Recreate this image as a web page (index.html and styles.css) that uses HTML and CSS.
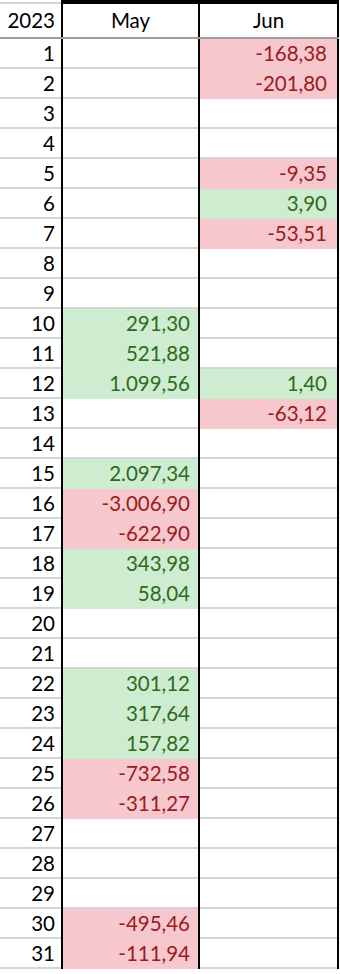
FILE: index.html
```html
<!DOCTYPE html>
<html>
<head>
<meta charset="utf-8">
<link rel="stylesheet" href="styles.css">
</head>
<body>
<div class="sheet">
  <div class="top-y"></div><div class="top-bar"></div>
  <div class="hd y">2023</div><div class="hd m">May</div><div class="hd j">Jun</div>
  <div class="hline"></div>

  <div class="c y">1</div><div class="c m"></div><div class="c j neg">-168,38</div>
  <div class="c y">2</div><div class="c m"></div><div class="c j neg">-201,80</div>
  <div class="c y">3</div><div class="c m"></div><div class="c j"></div>
  <div class="c y">4</div><div class="c m"></div><div class="c j"></div>
  <div class="c y">5</div><div class="c m"></div><div class="c j neg">-9,35</div>
  <div class="c y">6</div><div class="c m"></div><div class="c j pos">3,90</div>
  <div class="c y">7</div><div class="c m"></div><div class="c j neg">-53,51</div>
  <div class="c y">8</div><div class="c m"></div><div class="c j"></div>
  <div class="c y">9</div><div class="c m"></div><div class="c j"></div>
  <div class="c y">10</div><div class="c m pos">291,30</div><div class="c j"></div>
  <div class="c y">11</div><div class="c m pos">521,88</div><div class="c j"></div>
  <div class="c y">12</div><div class="c m pos">1.099,56</div><div class="c j pos">1,40</div>
  <div class="c y">13</div><div class="c m"></div><div class="c j neg">-63,12</div>
  <div class="c y">14</div><div class="c m"></div><div class="c j"></div>
  <div class="c y">15</div><div class="c m pos">2.097,34</div><div class="c j"></div>
  <div class="c y">16</div><div class="c m neg">-3.006,90</div><div class="c j"></div>
  <div class="c y">17</div><div class="c m neg">-622,90</div><div class="c j"></div>
  <div class="c y">18</div><div class="c m pos">343,98</div><div class="c j"></div>
  <div class="c y">19</div><div class="c m pos">58,04</div><div class="c j"></div>
  <div class="c y">20</div><div class="c m"></div><div class="c j"></div>
  <div class="c y">21</div><div class="c m"></div><div class="c j"></div>
  <div class="c y">22</div><div class="c m pos">301,12</div><div class="c j"></div>
  <div class="c y">23</div><div class="c m pos">317,64</div><div class="c j"></div>
  <div class="c y">24</div><div class="c m pos">157,82</div><div class="c j"></div>
  <div class="c y">25</div><div class="c m neg">-732,58</div><div class="c j"></div>
  <div class="c y">26</div><div class="c m neg">-311,27</div><div class="c j"></div>
  <div class="c y">27</div><div class="c m"></div><div class="c j"></div>
  <div class="c y">28</div><div class="c m"></div><div class="c j"></div>
  <div class="c y">29</div><div class="c m"></div><div class="c j"></div>
  <div class="c y">30</div><div class="c m neg">-495,46</div><div class="c j"></div>
  <div class="c y">31</div><div class="c m neg">-111,94</div><div class="c j"></div>
</div>
</body>
</html>
```
FILE: styles.css
```css
html, body {
  margin: 0;
  padding: 0;
  background: #ffffff;
}

.sheet {
  display: grid;
  grid-template-columns: 61px 137px 141px;
  width: 339px;
  font-family: Lato, "Open Sans", sans-serif;
  font-size: 20.5px;
  color: #000;
}

.top-y {
  height: 4px;
  box-sizing: border-box;
  border-top: 2px solid #fff;
  background: #d6d6d6;
}

.top-bar {
  grid-column: 2 / 4;
  height: 4px;
  background: #000;
}

.hd {
  height: 33px;
  line-height: 33px;
  box-sizing: border-box;
  white-space: nowrap;
}

.hd.y {
  text-align: right;
  padding-right: 6px;
}

.hd.m,
.hd.j {
  text-align: center;
}

.m {
  border-left: 2px solid #000;
}

.j {
  border-left: 2px solid #000;
  border-right: 2px solid #000;
}

.hline {
  grid-column: 1 / 4;
  height: 2px;
  background: #9c9c9c;
}

.c {
  height: 30px;
  line-height: 28px;
  box-sizing: border-box;
  text-align: right;
  white-space: nowrap;
  background-image: linear-gradient(#d5d5d5, #d5d5d5);
  background-size: 100% 2px;
  background-position: bottom left;
  background-repeat: no-repeat;
  background-origin: padding-box;
  background-clip: padding-box;
}

.c.y {
  padding-right: 6px;
}

.c.m {
  padding-right: 8px;
}

.c.j {
  padding-right: 10px;
}

.c.neg {
  background-image: none;
  background-color: #f6c7cd;
  color: #9a1b20;
}

.c.pos {
  background-image: none;
  background-color: #ceedd0;
  color: #2f6a1d;
}
```
